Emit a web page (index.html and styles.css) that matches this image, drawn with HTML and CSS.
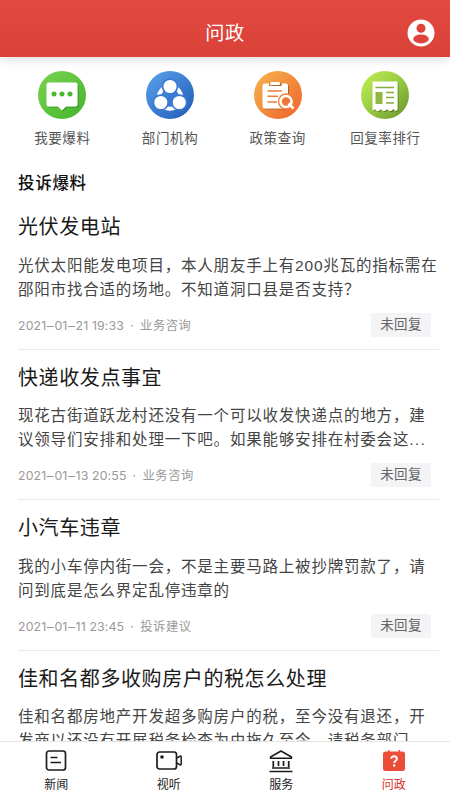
FILE: index.html
```html
<!DOCTYPE html>
<html lang="zh-CN">
<head>
<meta charset="utf-8">
<title>问政</title>
<link rel="stylesheet" href="styles.css">
</head>
<body>
<div class="app">
  <header class="topbar">
    <span></span>
    <h1>问政</h1>
    <svg class="avatar" viewBox="0 0 28 28">
      <circle cx="14" cy="14" r="13.5" fill="#fff"/>
      <circle cx="14" cy="9.2" r="4.5" fill="#de433c"/>
      <ellipse cx="14" cy="19.9" rx="7.8" ry="4.5" fill="#de433c"/>
    </svg>
  </header>

  <main class="content">
    <nav class="shortcuts">
      <a class="shortcut">
        <svg viewBox="0 0 48 48">
          <defs>
            <linearGradient id="green" x1="0" y1="0" x2="1" y2="1"><stop offset="0" stop-color="#7cd351"/><stop offset="1" stop-color="#42b62b"/></linearGradient>
            <filter id="soft" x="-20%" y="-20%" width="150%" height="150%"><feDropShadow dx="1" dy="1" stdDeviation=".7" flood-color="#000" flood-opacity=".3"/></filter>
          </defs>
          <circle cx="24" cy="24" r="24" fill="url(#green)"/>
          <path filter="url(#soft)" d="M10.5 11.5h27a2 2 0 0 1 2 2v20a2 2 0 0 1-2 2H28l-4 4-4-4h-9.500a2 2 0 0 1-2-2v-20a2 2 0 0 1 2-2Z" fill="#fff"/>
          <g fill="#48b82e"><circle cx="16" cy="23" r="2.500"/><circle cx="24" cy="23" r="2.500"/><circle cx="32" cy="23" r="2.500"/></g>
        </svg>
        <span>我要爆料</span>
      </a>
      <a class="shortcut">
        <svg viewBox="0 0 48 48">
          <defs><linearGradient id="blue" x1="0" y1="0" x2="1" y2="1"><stop offset="0" stop-color="#5aa3ec"/><stop offset="1" stop-color="#2159b7"/></linearGradient></defs>
          <circle cx="24" cy="24" r="24" fill="url(#blue)"/>
          <circle cx="24" cy="26.500" r="11.200" fill="none" stroke="#fff" stroke-width="4"/>
          <g fill="#fff" stroke="#3a7bd0" stroke-width="1.700"><circle cx="24" cy="15.500" r="7.400"/><circle cx="14.800" cy="31.500" r="7.400"/><circle cx="33.300" cy="31.500" r="7.400"/></g>
        </svg>
        <span>部门机构</span>
      </a>
      <a class="shortcut">
        <svg viewBox="0 0 48 48">
          <defs><linearGradient id="orange" x1="0" y1="0" x2="1" y2="1"><stop offset="0" stop-color="#f5b64e"/><stop offset="1" stop-color="#f0602c"/></linearGradient></defs>
          <circle cx="24" cy="24" r="24" fill="url(#orange)"/>
          <g filter="url(#soft)">
            <path d="M10.500 12.500H15v2.500h13v-2.500h4a2 2 0 0 1 2 2v21a2 2 0 0 1-2 2H10.500a2 2 0 0 1-2-2v-21a2 2 0 0 1 2-2Z" fill="#fff"/>
            <rect x="16.500" y="11" width="9.500" height="3" rx="1" fill="#fff"/>
          </g>
          <path d="M13.500 20h14.500M13.500 25.200h10.500M13.500 31h9.500" stroke="#ef7c38" stroke-width="1.600"/>
          <circle cx="32" cy="30.500" r="8.200" fill="#f18038"/>
          <circle cx="32" cy="30.500" r="5.500" fill="#ef7536" stroke="#fff" stroke-width="2.600"/>
          <path d="m34.500 32.500 5 5" stroke="#fff" stroke-width="2.500"/>
        </svg>
        <span>政策查询</span>
      </a>
      <a class="shortcut">
        <svg viewBox="0 0 48 48">
          <defs><linearGradient id="lime" x1="0" y1="0" x2="1" y2="1"><stop offset="0" stop-color="#c4f052"/><stop offset=".5" stop-color="#98cb43"/><stop offset="1" stop-color="#688f2b"/></linearGradient></defs>
          <circle cx="24" cy="24" r="24" fill="url(#lime)"/>
          <path filter="url(#soft)" d="M11.500 10.500h25v28.500l-2 1q-2.200-3.500-4.300 0h-2q-2.100-3.500-4.200 0h-2q-2.100-3.500-4.200 0h-2q-2.100-3.500-4.300 0Z" fill="#fff"/>
          <path d="M14.500 16.500h18.500M25 21.500h8M25 26.500h8M25 32h8" stroke="#86ad38" stroke-width="1.700"/>
          <rect x="14.500" y="21" width="7" height="12" fill="#8fb83c"/>
        </svg>
        <span>回复率排行</span>
      </a>
    </nav>

    <h2 class="section-title">投诉爆料</h2>

    <article class="post">
      <h3>光伏发电站</h3>
      <p>光伏太阳能发电项目，本人朋友手上有200兆瓦的指标需在<br>邵阳市找合适的场地。不知道洞口县是否支持？</p>
      <footer><span class="meta"><time>2021‒01‒21 19:33</time><i>·</i>业务咨询</span><span class="status">未回复</span></footer>
    </article>
    <article class="post">
      <h3>快递收发点事宜</h3>
      <p>现花古街道跃龙村还没有一个可以收发快递点的地方，建<br>议领导们安排和处理一下吧。如果能够安排在村委会这<span class="dots">...</span></p>
      <footer><span class="meta"><time>2021‒01‒13 20:55</time><i>·</i>业务咨询</span><span class="status">未回复</span></footer>
    </article>
    <article class="post">
      <h3>小汽车违章</h3>
      <p>我的小车停内街一会，不是主要马路上被抄牌罚款了，请<br>问到底是怎么界定乱停违章的</p>
      <footer><span class="meta"><time>2021‒01‒11 23:45</time><i>·</i>投诉建议</span><span class="status">未回复</span></footer>
    </article>
    <article class="post">
      <h3>佳和名都多收购房户的税怎么处理</h3>
      <p>佳和名都房地产开发超多购房户的税，至今没有退还，开<br>发商以还没有开展税务检查为由拖久至今，请税务部门<span class="dots">...</span></p>
    </article>
  </main>

  <nav class="tabbar">
    <a class="tab">
      <svg viewBox="0 0 28 24" fill="none" stroke="#1c1c1c" stroke-width="1.700"><rect x="4.500" y="2" width="19" height="19" rx="2.500"/><path d="M8.500 8.500h7M8.500 13.500h10.500"/></svg>
      <span>新闻</span>
    </a>
    <a class="tab">
      <svg viewBox="0 0 28 24" fill="none" stroke="#1c1c1c" stroke-width="1.700"><rect x="2" y="3" width="19.500" height="17" rx="2.500"/><path d="m22 9 3-1.800q1.200-.4 1.200.8v7q0 1.200-1.200.8l-3-1.800" stroke-width="1.500"/><circle cx="7" cy="8" r="1.800" fill="#1c1c1c" stroke="none"/></svg>
      <span>视听</span>
    </a>
    <a class="tab">
      <svg viewBox="0 0 28 24" fill="none" stroke="#1c1c1c" stroke-width="1.700"><path d="M14 2 3.500 8v1.300h21V8Z" stroke-width="1.500" stroke-linejoin="round"/><path d="M6.300 12v6M11.500 12v5M16.500 12v5M21.700 12v6M5 19h18M2.500 22.500h23"/></svg>
      <span>服务</span>
    </a>
    <a class="tab active">
      <svg viewBox="0 0 28 24"><defs><linearGradient id="red" x1="0" y1="0" x2="0" y2="1"><stop offset="0" stop-color="#ee5037"/><stop offset="1" stop-color="#e94b38"/></linearGradient></defs><path d="M5.500 2.500H8V1h1.500v1.500h9V1H20v1.500h2.500a2.500 2.500 0 0 1 2.500 2.500v14.500a2.500 2.500 0 0 1-2.500 2.500h-17A2.500 2.500 0 0 1 3 19.500V5a2.500 2.500 0 0 1 2.500-2.500Z" fill="url(#red)"/><path d="M11.300 9.800c0-3.500 5.600-3.300 5.600 0 0 2-2.700 2-2.700 4.200" fill="none" stroke="#fff" stroke-width="1.900"/><circle cx="14.200" cy="16.500" r="1.200" fill="#fff"/></svg>
      <span>问政</span>
    </a>
  </nav>
</div>
</body>
</html>
```
FILE: styles.css
```css
* { box-sizing: border-box; margin: 0; padding: 0; }

body {
  font-family: "Liberation Sans", "Noto Sans CJK SC", sans-serif;
  background: #fff;
  color: #222;
}

.app {
  display: flex;
  flex-direction: column;
  height: 800px;
  width: 450px;
  overflow: hidden;
}

.topbar {
  flex: none;
  display: grid;
  grid-template-columns: 1fr auto 1fr;
  align-items: end;
  height: 57px;
  padding: 0 15px 10px;
  background: linear-gradient(#e24941, #da4138);
  box-shadow: 0 3px 10px rgba(0, 0, 0, .12);
}

.topbar h1 {
  position: relative;
  top: 1px;
  font-size: 19.2px;
  font-weight: 400;
  line-height: 28px;
  letter-spacing: .6px;
  color: #fff;
}

.avatar { width: 28px; height: 28px; justify-self: end; }

.content { flex: 1; min-height: 0; overflow: hidden; padding: 0 11px 0 18px; margin-top: 14px; }

.shortcuts {
  display: grid;
  grid-template-columns: repeat(4, 107.7px);
  margin-left: -9.500px;
}

.shortcut { display: flex; flex-direction: column; align-items: center; }
.shortcut svg { width: 48px; height: 48px; }
.shortcut span {
  margin-top: 9px;
  font-size: 13.5px;
  line-height: 22px;
  letter-spacing: .6px;
  color: #555;
  white-space: nowrap;
}

.section-title {
  margin: 21px 0 4px;
  font-size: 16.5px;
  font-weight: 500;
  line-height: 24px;
  letter-spacing: .7px;
  color: #111;
}

.post {
  height: 150.5px;
  padding-top: 13px;
  border-bottom: 1px solid #e9e9e9;
  white-space: nowrap;
}

.post h3 {
  font-size: 20px;
  font-weight: 400;
  line-height: 30px;
  letter-spacing: .6px;
  color: #1a1a1a;
}

.post p {
  margin-top: 11.5px;
  font-size: 15.5px;
  line-height: 24.200px;
  letter-spacing: .8px;
  color: #444;
}

.dots { letter-spacing: 1.300px; }

.post footer {
  display: flex;
  align-items: center;
  justify-content: space-between;
  margin-top: 11px;
  padding-right: 8px;
}

.meta {
  font-family: Inter, "Noto Sans CJK SC", sans-serif;
  font-size: 12.300px;
  letter-spacing: .5px;
  color: #999;
}
.meta time { letter-spacing: .14px; }
.meta i { margin: 0 6px; font-style: normal; }

.status {
  width: 60px;
  height: 24px;
  border-radius: 2px;
  background: #f4f4f6;
  font-size: 13.500px;
  line-height: 24px;
  letter-spacing: .4px;
  text-align: center;
  color: #666;
}

.tabbar {
  flex: none;
  display: grid;
  grid-template-columns: repeat(4, 1fr);
  height: 59px;
  border-top: 1px solid #e4e4e4;
  background: #fff;
}

.tab { display: flex; flex-direction: column; align-items: center; padding-top: 7px; }
.tab svg { width: 28px; height: 24px; }
.tab span { margin-top: 3px; font-size: 12px; line-height: 18px; color: #222; }
.tab.active span { color: #d8322b; }
```
